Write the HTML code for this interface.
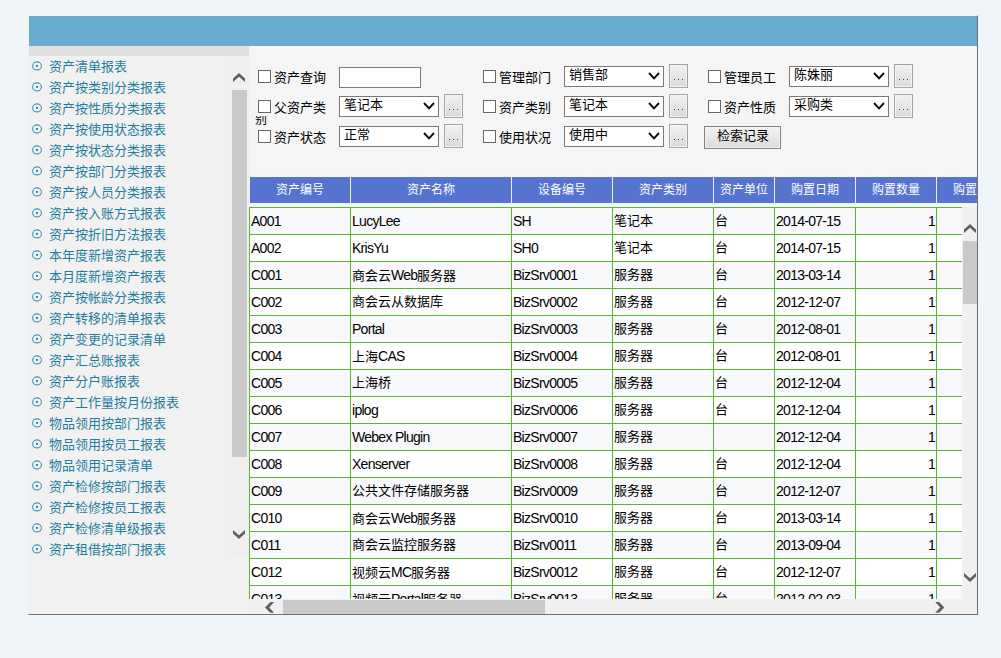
<!DOCTYPE html><html lang="zh-CN"><head><meta charset="utf-8"><title>资产报表</title><style>
html,body{margin:0;padding:0}
body{width:1001px;height:658px;overflow:hidden;background:#f0f5f9;position:relative;font-family:"Liberation Sans",sans-serif;font-size:13px;color:#000}
.a{position:absolute}
#frame{left:28px;top:15px;width:948px;height:598px;border:1px solid;border-color:#f4f2f1 #6f6f6f #6f6f6f #f2f1f0;background:#f5f5f5}
#bar{left:29px;top:16px;width:948px;height:30px;background:#68adcd}
#lp{left:29px;top:46px;width:220px;height:568px;background:#f1f1f1}
#lph{left:29px;top:46px;width:220px;height:10px;background:#e0e0e0}
#lsb{left:231px;top:56px;width:18px;height:500px;background:#efefef}
.thumb{background:#c9c9c9}
ul{list-style:none;margin:0;padding:0}
#menu{left:29px;top:56px;width:200px}
#menu li{height:21px;overflow:hidden;line-height:21px;position:relative;padding-left:20px;color:#1f7e9f;font-size:13px;white-space:nowrap}
#menu li svg{position:absolute;left:3px;top:5.4px}
.cb{width:11px;height:11px;border:1px solid #686868;background:#fff}
.lb{font-size:13px;line-height:15px;white-space:nowrap}
.inp{height:19px;border:1px solid #7c7c7c;background:#fff}
.sel{width:98px;height:19px;border:1px solid #7a7a7a;background:#fff;font-size:13px;line-height:17px;overflow:hidden;white-space:nowrap}
.sel span{position:absolute;left:4px;top:-1px}
.sel svg{position:absolute;right:3px;top:5px}
.btn{width:17px;height:22px;border:1px solid #a3a3a3;background:linear-gradient(#f1f1f1,#e6e6e6 50%,#d9d9d9);box-shadow:inset 0 0 0 1px #f3f3f3}
.btn i{position:absolute;top:14px;width:1.3px;height:1.4px;background:#444}
.hd{top:177px;height:26px;background:#5573cf;color:#fff;font-size:12px;line-height:26px;text-align:center;white-space:nowrap;overflow:hidden;text-indent:-1px}
#tb{left:249px;top:207px;width:713px;height:392px;overflow:hidden;background:#fff}
table{border-collapse:collapse;table-layout:fixed;width:790px;font-size:13px}
td{border:1px solid #5ab534;height:27px;padding:0 1px 0 1px;white-space:nowrap;overflow:hidden;line-height:18px;box-sizing:border-box}
tr:nth-child(odd) td{background:#f7f8fa}
tr:nth-child(even) td{background:#fff}
td.r{text-align:right}
td b{font-weight:normal;font-size:14px;letter-spacing:-0.72px;position:relative;top:0.5px}
</style></head><body>
<div class="a" id="frame"></div><div class="a" id="bar"></div>
<div class="a" id="lp"></div><div class="a" id="lph"></div><div class="a" id="lsb"></div>
<svg class="a" style="left:233px;top:73px" width="12" height="9" viewBox="0 0 12 9"><polygon points="0,5.6 6,0 12,5.6 12,9 6,3.7 0,9" fill="#606060"/></svg>
<div class="a thumb" style="left:232px;top:90px;width:15px;height:367px"></div>
<svg class="a" style="left:233px;top:530px" width="12" height="9" viewBox="0 0 12 9"><polygon points="0,3.4 6,9 12,3.4 12,0 6,5.3 0,0" fill="#606060"/></svg>
<ul class="a" id="menu"><li><svg width="10" height="10" viewBox="0 0 10 10"><ellipse cx="5" cy="4.9" rx="4.4" ry="4.0" fill="none" stroke="#4394b0" stroke-width="1.1"/><rect x="4" y="4" width="2" height="1.8" fill="#2583a3"/></svg>资产清单报表</li><li><svg width="10" height="10" viewBox="0 0 10 10"><ellipse cx="5" cy="4.9" rx="4.4" ry="4.0" fill="none" stroke="#4394b0" stroke-width="1.1"/><rect x="4" y="4" width="2" height="1.8" fill="#2583a3"/></svg>资产按类别分类报表</li><li><svg width="10" height="10" viewBox="0 0 10 10"><ellipse cx="5" cy="4.9" rx="4.4" ry="4.0" fill="none" stroke="#4394b0" stroke-width="1.1"/><rect x="4" y="4" width="2" height="1.8" fill="#2583a3"/></svg>资产按性质分类报表</li><li><svg width="10" height="10" viewBox="0 0 10 10"><ellipse cx="5" cy="4.9" rx="4.4" ry="4.0" fill="none" stroke="#4394b0" stroke-width="1.1"/><rect x="4" y="4" width="2" height="1.8" fill="#2583a3"/></svg>资产按使用状态报表</li><li><svg width="10" height="10" viewBox="0 0 10 10"><ellipse cx="5" cy="4.9" rx="4.4" ry="4.0" fill="none" stroke="#4394b0" stroke-width="1.1"/><rect x="4" y="4" width="2" height="1.8" fill="#2583a3"/></svg>资产按状态分类报表</li><li><svg width="10" height="10" viewBox="0 0 10 10"><ellipse cx="5" cy="4.9" rx="4.4" ry="4.0" fill="none" stroke="#4394b0" stroke-width="1.1"/><rect x="4" y="4" width="2" height="1.8" fill="#2583a3"/></svg>资产按部门分类报表</li><li><svg width="10" height="10" viewBox="0 0 10 10"><ellipse cx="5" cy="4.9" rx="4.4" ry="4.0" fill="none" stroke="#4394b0" stroke-width="1.1"/><rect x="4" y="4" width="2" height="1.8" fill="#2583a3"/></svg>资产按人员分类报表</li><li><svg width="10" height="10" viewBox="0 0 10 10"><ellipse cx="5" cy="4.9" rx="4.4" ry="4.0" fill="none" stroke="#4394b0" stroke-width="1.1"/><rect x="4" y="4" width="2" height="1.8" fill="#2583a3"/></svg>资产按入账方式报表</li><li><svg width="10" height="10" viewBox="0 0 10 10"><ellipse cx="5" cy="4.9" rx="4.4" ry="4.0" fill="none" stroke="#4394b0" stroke-width="1.1"/><rect x="4" y="4" width="2" height="1.8" fill="#2583a3"/></svg>资产按折旧方法报表</li><li><svg width="10" height="10" viewBox="0 0 10 10"><ellipse cx="5" cy="4.9" rx="4.4" ry="4.0" fill="none" stroke="#4394b0" stroke-width="1.1"/><rect x="4" y="4" width="2" height="1.8" fill="#2583a3"/></svg>本年度新增资产报表</li><li><svg width="10" height="10" viewBox="0 0 10 10"><ellipse cx="5" cy="4.9" rx="4.4" ry="4.0" fill="none" stroke="#4394b0" stroke-width="1.1"/><rect x="4" y="4" width="2" height="1.8" fill="#2583a3"/></svg>本月度新增资产报表</li><li><svg width="10" height="10" viewBox="0 0 10 10"><ellipse cx="5" cy="4.9" rx="4.4" ry="4.0" fill="none" stroke="#4394b0" stroke-width="1.1"/><rect x="4" y="4" width="2" height="1.8" fill="#2583a3"/></svg>资产按帐龄分类报表</li><li><svg width="10" height="10" viewBox="0 0 10 10"><ellipse cx="5" cy="4.9" rx="4.4" ry="4.0" fill="none" stroke="#4394b0" stroke-width="1.1"/><rect x="4" y="4" width="2" height="1.8" fill="#2583a3"/></svg>资产转移的清单报表</li><li><svg width="10" height="10" viewBox="0 0 10 10"><ellipse cx="5" cy="4.9" rx="4.4" ry="4.0" fill="none" stroke="#4394b0" stroke-width="1.1"/><rect x="4" y="4" width="2" height="1.8" fill="#2583a3"/></svg>资产变更的记录清单</li><li><svg width="10" height="10" viewBox="0 0 10 10"><ellipse cx="5" cy="4.9" rx="4.4" ry="4.0" fill="none" stroke="#4394b0" stroke-width="1.1"/><rect x="4" y="4" width="2" height="1.8" fill="#2583a3"/></svg>资产汇总账报表</li><li><svg width="10" height="10" viewBox="0 0 10 10"><ellipse cx="5" cy="4.9" rx="4.4" ry="4.0" fill="none" stroke="#4394b0" stroke-width="1.1"/><rect x="4" y="4" width="2" height="1.8" fill="#2583a3"/></svg>资产分户账报表</li><li><svg width="10" height="10" viewBox="0 0 10 10"><ellipse cx="5" cy="4.9" rx="4.4" ry="4.0" fill="none" stroke="#4394b0" stroke-width="1.1"/><rect x="4" y="4" width="2" height="1.8" fill="#2583a3"/></svg>资产工作量按月份报表</li><li><svg width="10" height="10" viewBox="0 0 10 10"><ellipse cx="5" cy="4.9" rx="4.4" ry="4.0" fill="none" stroke="#4394b0" stroke-width="1.1"/><rect x="4" y="4" width="2" height="1.8" fill="#2583a3"/></svg>物品领用按部门报表</li><li><svg width="10" height="10" viewBox="0 0 10 10"><ellipse cx="5" cy="4.9" rx="4.4" ry="4.0" fill="none" stroke="#4394b0" stroke-width="1.1"/><rect x="4" y="4" width="2" height="1.8" fill="#2583a3"/></svg>物品领用按员工报表</li><li><svg width="10" height="10" viewBox="0 0 10 10"><ellipse cx="5" cy="4.9" rx="4.4" ry="4.0" fill="none" stroke="#4394b0" stroke-width="1.1"/><rect x="4" y="4" width="2" height="1.8" fill="#2583a3"/></svg>物品领用记录清单</li><li><svg width="10" height="10" viewBox="0 0 10 10"><ellipse cx="5" cy="4.9" rx="4.4" ry="4.0" fill="none" stroke="#4394b0" stroke-width="1.1"/><rect x="4" y="4" width="2" height="1.8" fill="#2583a3"/></svg>资产检修按部门报表</li><li><svg width="10" height="10" viewBox="0 0 10 10"><ellipse cx="5" cy="4.9" rx="4.4" ry="4.0" fill="none" stroke="#4394b0" stroke-width="1.1"/><rect x="4" y="4" width="2" height="1.8" fill="#2583a3"/></svg>资产检修按员工报表</li><li><svg width="10" height="10" viewBox="0 0 10 10"><ellipse cx="5" cy="4.9" rx="4.4" ry="4.0" fill="none" stroke="#4394b0" stroke-width="1.1"/><rect x="4" y="4" width="2" height="1.8" fill="#2583a3"/></svg>资产检修清单级报表</li><li><svg width="10" height="10" viewBox="0 0 10 10"><ellipse cx="5" cy="4.9" rx="4.4" ry="4.0" fill="none" stroke="#4394b0" stroke-width="1.1"/><rect x="4" y="4" width="2" height="1.8" fill="#2583a3"/></svg>资产租借按部门报表</li></ul>
<div class="a cb" style="left:258px;top:70px"></div>
<div class="a lb" style="left:274px;top:70px">资产查询</div>
<div class="a inp" style="left:339px;top:67px;width:80px"></div>
<div class="a cb" style="left:258px;top:100px"></div>
<div class="a lb" style="left:274px;top:100px">父资产类</div>
<div class="a sel" style="left:339px;top:96px"><span>笔记本</span><svg width="12" height="8" viewBox="0 0 12 8"><path d="M1 1 L6 6.3 L11 1" fill="none" stroke="#0a0a0a" stroke-width="1.9"/></svg></div>
<div class="a btn" style="left:444px;top:94px"><i style="left:3.6px"></i><i style="left:7.6px"></i><i style="left:11.6px"></i></div>
<div class="a cb" style="left:258px;top:130px"></div>
<div class="a lb" style="left:274px;top:130px">资产状态</div>
<div class="a sel" style="left:339px;top:126px"><span>正常</span><svg width="12" height="8" viewBox="0 0 12 8"><path d="M1 1 L6 6.3 L11 1" fill="none" stroke="#0a0a0a" stroke-width="1.9"/></svg></div>
<div class="a btn" style="left:444px;top:124px"><i style="left:3.6px"></i><i style="left:7.6px"></i><i style="left:11.6px"></i></div>
<div class="a cb" style="left:483px;top:70px"></div>
<div class="a lb" style="left:499px;top:70px">管理部门</div>
<div class="a sel" style="left:564px;top:66px"><span>销售部</span><svg width="12" height="8" viewBox="0 0 12 8"><path d="M1 1 L6 6.3 L11 1" fill="none" stroke="#0a0a0a" stroke-width="1.9"/></svg></div>
<div class="a btn" style="left:669px;top:64px"><i style="left:3.6px"></i><i style="left:7.6px"></i><i style="left:11.6px"></i></div>
<div class="a cb" style="left:483px;top:100px"></div>
<div class="a lb" style="left:499px;top:100px">资产类别</div>
<div class="a sel" style="left:564px;top:96px"><span>笔记本</span><svg width="12" height="8" viewBox="0 0 12 8"><path d="M1 1 L6 6.3 L11 1" fill="none" stroke="#0a0a0a" stroke-width="1.9"/></svg></div>
<div class="a btn" style="left:669px;top:94px"><i style="left:3.6px"></i><i style="left:7.6px"></i><i style="left:11.6px"></i></div>
<div class="a cb" style="left:483px;top:130px"></div>
<div class="a lb" style="left:499px;top:130px">使用状况</div>
<div class="a sel" style="left:564px;top:126px"><span>使用中</span><svg width="12" height="8" viewBox="0 0 12 8"><path d="M1 1 L6 6.3 L11 1" fill="none" stroke="#0a0a0a" stroke-width="1.9"/></svg></div>
<div class="a btn" style="left:669px;top:124px"><i style="left:3.6px"></i><i style="left:7.6px"></i><i style="left:11.6px"></i></div>
<div class="a cb" style="left:708px;top:70px"></div>
<div class="a lb" style="left:724px;top:70px">管理员工</div>
<div class="a sel" style="left:789px;top:66px"><span>陈姝丽</span><svg width="12" height="8" viewBox="0 0 12 8"><path d="M1 1 L6 6.3 L11 1" fill="none" stroke="#0a0a0a" stroke-width="1.9"/></svg></div>
<div class="a btn" style="left:894px;top:64px"><i style="left:3.6px"></i><i style="left:7.6px"></i><i style="left:11.6px"></i></div>
<div class="a cb" style="left:708px;top:100px"></div>
<div class="a lb" style="left:724px;top:100px">资产性质</div>
<div class="a sel" style="left:789px;top:96px"><span>采购类</span><svg width="12" height="8" viewBox="0 0 12 8"><path d="M1 1 L6 6.3 L11 1" fill="none" stroke="#0a0a0a" stroke-width="1.9"/></svg></div>
<div class="a btn" style="left:894px;top:94px"><i style="left:3.6px"></i><i style="left:7.6px"></i><i style="left:11.6px"></i></div>
<div class="a" style="left:255px;top:116px;width:14px;height:10.5px;overflow:hidden;font-size:12px;line-height:12px"><div style="margin-top:-2px">别</div></div>
<div class="a" style="left:704px;top:126px;width:75px;height:21px;border:1px solid #828282;background:linear-gradient(#f2f2f2,#e8e8e8 50%,#d9d9d9);box-shadow:inset 0 0 0 1px #f5f5f5;font-size:13px;line-height:18px;text-align:center;white-space:nowrap;overflow:hidden">检索记录</div>
<div class="a" style="left:250px;top:177px;width:727px;height:26px;background:#eef0f8"></div>
<div class="a hd" style="left:250px;width:100px">资产编号</div>
<div class="a hd" style="left:351px;width:160px">资产名称</div>
<div class="a hd" style="left:512px;width:100px">设备编号</div>
<div class="a hd" style="left:613px;width:100px">资产类别</div>
<div class="a hd" style="left:714px;width:60px">资产单位</div>
<div class="a hd" style="left:775px;width:80px">购置日期</div>
<div class="a hd" style="left:856px;width:80px">购置数量</div>
<div class="a hd" style="left:937px;width:40px"><div style="width:80px">购置金额</div></div>
<div class="a" id="tb"><table><colgroup><col style="width:101px"><col style="width:161px"><col style="width:101px"><col style="width:101px"><col style="width:61px"><col style="width:81px"><col style="width:81px"><col style="width:103px"></colgroup>
<tr><td><b>A001</b></td><td><b>LucyLee</b></td><td><b>SH</b></td><td>笔记本</td><td>台</td><td><b>2014-07-15</b></td><td class="r"><b>1</b></td><td></td></tr>
<tr><td><b>A002</b></td><td><b>KrisYu</b></td><td><b>SH0</b></td><td>笔记本</td><td>台</td><td><b>2014-07-15</b></td><td class="r"><b>1</b></td><td></td></tr>
<tr><td><b>C001</b></td><td>商会云<b>Web</b>服务器</td><td><b>BizSrv0001</b></td><td>服务器</td><td>台</td><td><b>2013-03-14</b></td><td class="r"><b>1</b></td><td></td></tr>
<tr><td><b>C002</b></td><td>商会云从数据库</td><td><b>BizSrv0002</b></td><td>服务器</td><td>台</td><td><b>2012-12-07</b></td><td class="r"><b>1</b></td><td></td></tr>
<tr><td><b>C003</b></td><td><b>Portal</b></td><td><b>BizSrv0003</b></td><td>服务器</td><td>台</td><td><b>2012-08-01</b></td><td class="r"><b>1</b></td><td></td></tr>
<tr><td><b>C004</b></td><td>上海<b>CAS</b></td><td><b>BizSrv0004</b></td><td>服务器</td><td>台</td><td><b>2012-08-01</b></td><td class="r"><b>1</b></td><td></td></tr>
<tr><td><b>C005</b></td><td>上海桥</td><td><b>BizSrv0005</b></td><td>服务器</td><td>台</td><td><b>2012-12-04</b></td><td class="r"><b>1</b></td><td></td></tr>
<tr><td><b>C006</b></td><td><b>iplog</b></td><td><b>BizSrv0006</b></td><td>服务器</td><td>台</td><td><b>2012-12-04</b></td><td class="r"><b>1</b></td><td></td></tr>
<tr><td><b>C007</b></td><td><b>Webex Plugin</b></td><td><b>BizSrv0007</b></td><td>服务器</td><td></td><td><b>2012-12-04</b></td><td class="r"><b>1</b></td><td></td></tr>
<tr><td><b>C008</b></td><td><b>Xenserver</b></td><td><b>BizSrv0008</b></td><td>服务器</td><td>台</td><td><b>2012-12-04</b></td><td class="r"><b>1</b></td><td></td></tr>
<tr><td><b>C009</b></td><td>公共文件存储服务器</td><td><b>BizSrv0009</b></td><td>服务器</td><td>台</td><td><b>2012-12-07</b></td><td class="r"><b>1</b></td><td></td></tr>
<tr><td><b>C010</b></td><td>商会云<b>Web</b>服务器</td><td><b>BizSrv0010</b></td><td>服务器</td><td>台</td><td><b>2013-03-14</b></td><td class="r"><b>1</b></td><td></td></tr>
<tr><td><b>C011</b></td><td>商会云监控服务器</td><td><b>BizSrv0011</b></td><td>服务器</td><td>台</td><td><b>2013-09-04</b></td><td class="r"><b>1</b></td><td></td></tr>
<tr><td><b>C012</b></td><td>视频云<b>MC</b>服务器</td><td><b>BizSrv0012</b></td><td>服务器</td><td>台</td><td><b>2012-12-07</b></td><td class="r"><b>1</b></td><td></td></tr>
<tr><td><b>C013</b></td><td>视频云<b>Portal</b>服务器</td><td><b>BizSrv0013</b></td><td>服务器</td><td>台</td><td><b>2012-02-03</b></td><td class="r"><b>1</b></td><td></td></tr>
</table></div>
<div class="a" style="left:962px;top:207px;width:15px;height:407px;background:#f0f0f0"></div>
<div class="a" style="left:249px;top:599px;width:728px;height:15px;background:#f0f0f0"></div>
<svg class="a" style="left:964px;top:224px" width="12" height="9" viewBox="0 0 12 9"><polygon points="0,5.6 6,0 12,5.6 12,9 6,3.7 0,9" fill="#606060"/></svg>
<div class="a thumb" style="left:963px;top:241px;width:14px;height:63px"></div>
<svg class="a" style="left:964px;top:573px" width="12" height="9" viewBox="0 0 12 9"><polygon points="0,3.4 6,9 12,3.4 12,0 6,5.3 0,0" fill="#606060"/></svg>
<svg class="a" style="left:265.3px;top:602px" width="10" height="11" viewBox="0 0 10 11"><polygon points="0,5.4 5.4,0 9.1,0 4.2,5.4 9.1,10.8 5.4,10.8" fill="#606060"/></svg>
<div class="a thumb" style="left:283px;top:600px;width:262px;height:14px"></div>
<svg class="a" style="left:935.4px;top:602px" width="10" height="11" viewBox="0 0 10 11"><polygon points="9.4,5.4 4,0 0.3,0 5.2,5.4 0.3,10.8 4,10.8" fill="#606060"/></svg>
</body></html>
